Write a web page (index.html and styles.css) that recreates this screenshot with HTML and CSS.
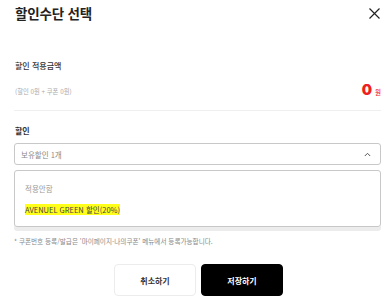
FILE: index.html
```html
<!DOCTYPE html>
<html lang="ko">
<head>
<meta charset="utf-8">
<link rel="stylesheet" href="styles.css">
</head>
<body>
<div class="modal">
  <header class="head">
    <h1 class="title">할인수단 선택</h1>
    <button class="close" aria-label="닫기">
      <svg width="11" height="11" viewBox="0 0 11 11"><path d="M0.5 0.5L10.5 10.5M10.5 0.5L0.5 10.5" stroke="#222" stroke-width="1.2" fill="none"/></svg>
    </button>
  </header>
  <section class="amount">
    <div class="amount-label">할인 적용금액</div>
    <div class="amount-row">
      <span class="amount-sub">(할인 0원 + 쿠폰 0원)</span>
      <span class="amount-val"><b>0</b><small>원</small></span>
    </div>
  </section>
  <hr class="divider">
  <section class="discount">
    <div class="disc-label">할인</div>
    <div class="select">
      <span>보유할인 1개</span>
      <svg width="7" height="5" viewBox="0 0 7 5"><path d="M0.8 4L3.5 1.3L6.2 4" stroke="#555" stroke-width="1" fill="none"/></svg>
    </div>
    <div class="dropdown">
      <div class="opt none">적용안함</div>
      <div class="opt"><mark>AVENUEL GREEN 할인(20%)</mark></div>
    </div>
    <p class="note">* 쿠폰번호 등록/발급은 '마이페이지-나의쿠폰' 메뉴에서 등록가능합니다.</p>
  </section>
  <div class="actions">
    <button class="btn cancel">취소하기</button>
    <button class="btn save">저장하기</button>
  </div>
</div>
</body>
</html>
```
FILE: styles.css
```css
* { box-sizing: border-box; }
html, body { margin: 0; padding: 0; background: #fff; }
body { font-family: "Noto Sans CJK KR", "Noto Sans", sans-serif; color: #222; }
.modal { width: 386px; height: 306px; padding: 0 5px 0 14px; overflow: hidden; }
.head { display: flex; justify-content: space-between; align-items: center; height: 26px; padding-top: 1px; }
.title { margin: 0 0 0 1px; font-size: 13.5px; font-weight: 700; line-height: 1; color: #222; letter-spacing: -0.2px; }
.close { border: 0; background: none; padding: 0; margin-right: 1px; width: 11px; height: 11px; display: flex; }
.amount { margin-top: 34px; padding-left: 1px; }
.amount-label { font-size: 8px; line-height: 12px; color: #333; font-weight: 500; }
.amount-row { display: flex; justify-content: space-between; align-items: flex-end; margin-top: 7px; height: 20px; }
.amount-sub { font-size: 6.3px; color: #aaa; line-height: 10px; padding-bottom: 2px; }
.amount-val { color: #f02020; display: flex; align-items: baseline; gap: 3px; }
.amount-val b { font-family: "Inter", "Roboto", sans-serif; font-size: 14.5px; font-weight: 900; line-height: 18px; }
.amount-val small { font-size: 6.5px; font-weight: 500; }
.divider { border: 0; border-top: 1px solid #efefef; margin: 11px 0 0 0; }
.discount { padding-top: 14px; }
.disc-label { font-size: 8px; font-weight: 700; line-height: 12px; color: #333; padding-left: 1px; }
.select { margin-top: 6px; height: 22px; border: 1px solid #c8c8c8; border-radius: 3px; display: flex; justify-content: space-between; align-items: center; padding: 0 9px 0 6px; font-size: 7.5px; color: #888; }
.dropdown { margin-top: 5px; height: 57px; border: 1px solid #c8c8c8; border-radius: 3px; box-shadow: 0 4px 0 #ececec; padding: 12px 10px 0 10px; }
.opt { font-size: 7.5px; line-height: 11px; color: #333; }
.opt.none { color: #999; margin-bottom: 10px; }
.opt mark { background: #ffff1a; color: #444; padding: 0; }
.note { margin: 9.5px 0 0 0; font-size: 6.6px; line-height: 9px; color: #888; }
.actions { display: flex; justify-content: center; gap: 5px; margin-top: 18.5px; padding-left: 2px; }
.btn { width: 82px; height: 32px; border-radius: 4px; font-family: inherit; font-size: 8px; font-weight: 700; }
.cancel { background: #fff; border: 1px solid #ececec; color: #333; }
.save { background: #000; border: 1px solid #000; color: #fff; }
```
